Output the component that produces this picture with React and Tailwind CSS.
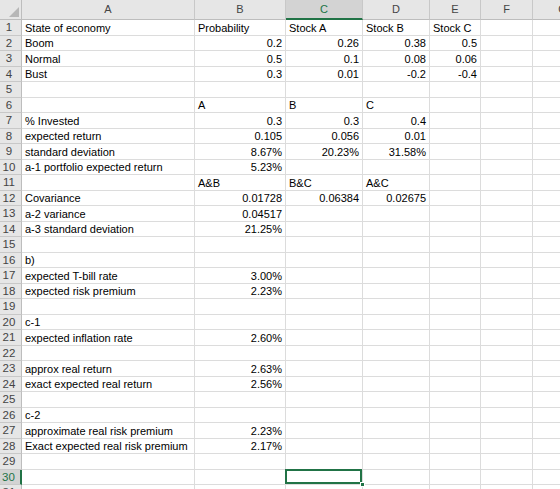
import React from "react";

const cols = ["A", "B", "C", "D", "E", "F", "G"];

// numbers and "#"-suffixed strings are right-aligned like Excel values
const data = {
  1: { A: "State of economy", B: "Probability", C: "Stock A", D: "Stock B", E: "Stock C" },
  2: { A: "Boom", B: 0.2, C: 0.26, D: 0.38, E: 0.5 },
  3: { A: "Normal", B: 0.5, C: 0.1, D: 0.08, E: 0.06 },
  4: { A: "Bust", B: 0.3, C: 0.01, D: -0.2, E: -0.4 },
  6: { B: "A", C: "B", D: "C" },
  7: { A: "% Invested", B: 0.3, C: 0.3, D: 0.4 },
  8: { A: "expected return", B: 0.105, C: 0.056, D: 0.01 },
  9: { A: "standard deviation", B: "8.67%#", C: "20.23%#", D: "31.58%#" },
  10: { A: "a-1 portfolio expected return", B: "5.23%#" },
  11: { B: "A&B", C: "B&C", D: "A&C" },
  12: { A: "Covariance", B: 0.01728, C: 0.06384, D: 0.02675 },
  13: { A: "a-2 variance", B: 0.04517 },
  14: { A: "a-3 standard deviation", B: "21.25%#" },
  16: { A: "b)" },
  17: { A: "expected T-bill rate", B: "3.00%#" },
  18: { A: "expected risk premium", B: "2.23%#" },
  20: { A: "c-1" },
  21: { A: "expected inflation rate", B: "2.60%#" },
  23: { A: "approx real return", B: "2.63%#" },
  24: { A: "exact expected real return", B: "2.56%#" },
  26: { A: "c-2" },
  27: { A: "approximate real risk premium", B: "2.23%#" },
  28: { A: "Exact expected real risk premium", B: "2.17%#" },
};

function Cell({ value, selected }) {
  let text = "";
  let right = false;
  if (typeof value === "number") {
    text = String(value);
    right = true;
  } else if (typeof value === "string" && value.endsWith("#")) {
    text = value.slice(0, -1);
    right = true;
  } else if (value) {
    text = value;
  }
  return (
    <div
      className={`relative border-r border-b border-[#dcdcdc] bg-white flex items-end pb-[1px] whitespace-nowrap ${
        right ? "justify-end pr-[3px]" : "justify-start pl-[3px]"
      }`}
    >
      <span className="leading-none text-black">{text}</span>
      {selected && (
        <>
          <div className="absolute -left-[1px] -top-[1px] right-0 bottom-0 border-2 border-[#217346] z-10" />
          <div className="absolute -right-[3px] -bottom-[3px] w-[5px] h-[5px] bg-[#217346] border border-white z-20" />
        </>
      )}
    </div>
  );
}

export default function App() {
  const rows = Array.from({ length: 31 }, (_, i) => i + 1);
  return (
    <div
      className="w-[560px] h-[489px] overflow-hidden bg-white text-[11px]"
      style={{ fontFamily: '"Liberation Sans", Arial, sans-serif' }}
    >
      <div className="grid grid-cols-[22px_173px_91px_77px_67px_51px_52px_60px] grid-rows-[20px_repeat(31,15.5px)]">
        {/* select-all corner */}
        <div className="relative bg-[#e6e6e6] border-r border-b border-[#bdbdbd]">
          <svg className="absolute right-[2px] bottom-[2px]" width="10" height="10" viewBox="0 0 10 10">
            <polygon points="10,0 10,10 0,10" fill="#b7b7b7" />
          </svg>
        </div>
        {cols.map((c) => (
          <div
            key={c}
            className={`flex items-center justify-center border-r border-[#c8c8c8] ${
              c === "C"
                ? "bg-[#d3d3d3] text-[#217346] border-b-2 border-b-[#217346]"
                : "bg-[#e6e6e6] text-[#444] border-b border-b-[#bdbdbd]"
            }`}
          >
            {c}
          </div>
        ))}
        {rows.map((r) => (
          <React.Fragment key={r}>
            <div
              className={`flex items-end justify-center pr-[3px] pb-[1px] leading-none text-[11.5px] ${
                r === 30
                  ? "bg-[#d3d3d3] text-[#217346] border-r-2 border-r-[#217346] border-b border-b-[#c8c8c8]"
                  : "bg-[#e6e6e6] text-[#444] border-r border-r-[#bdbdbd] border-b border-b-[#c8c8c8]"
              }`}
            >
              {r}
            </div>
            {cols.map((c) => (
              <Cell key={c} value={data[r]?.[c]} selected={r === 30 && c === "C"} />
            ))}
          </React.Fragment>
        ))}
      </div>
    </div>
  );
}
